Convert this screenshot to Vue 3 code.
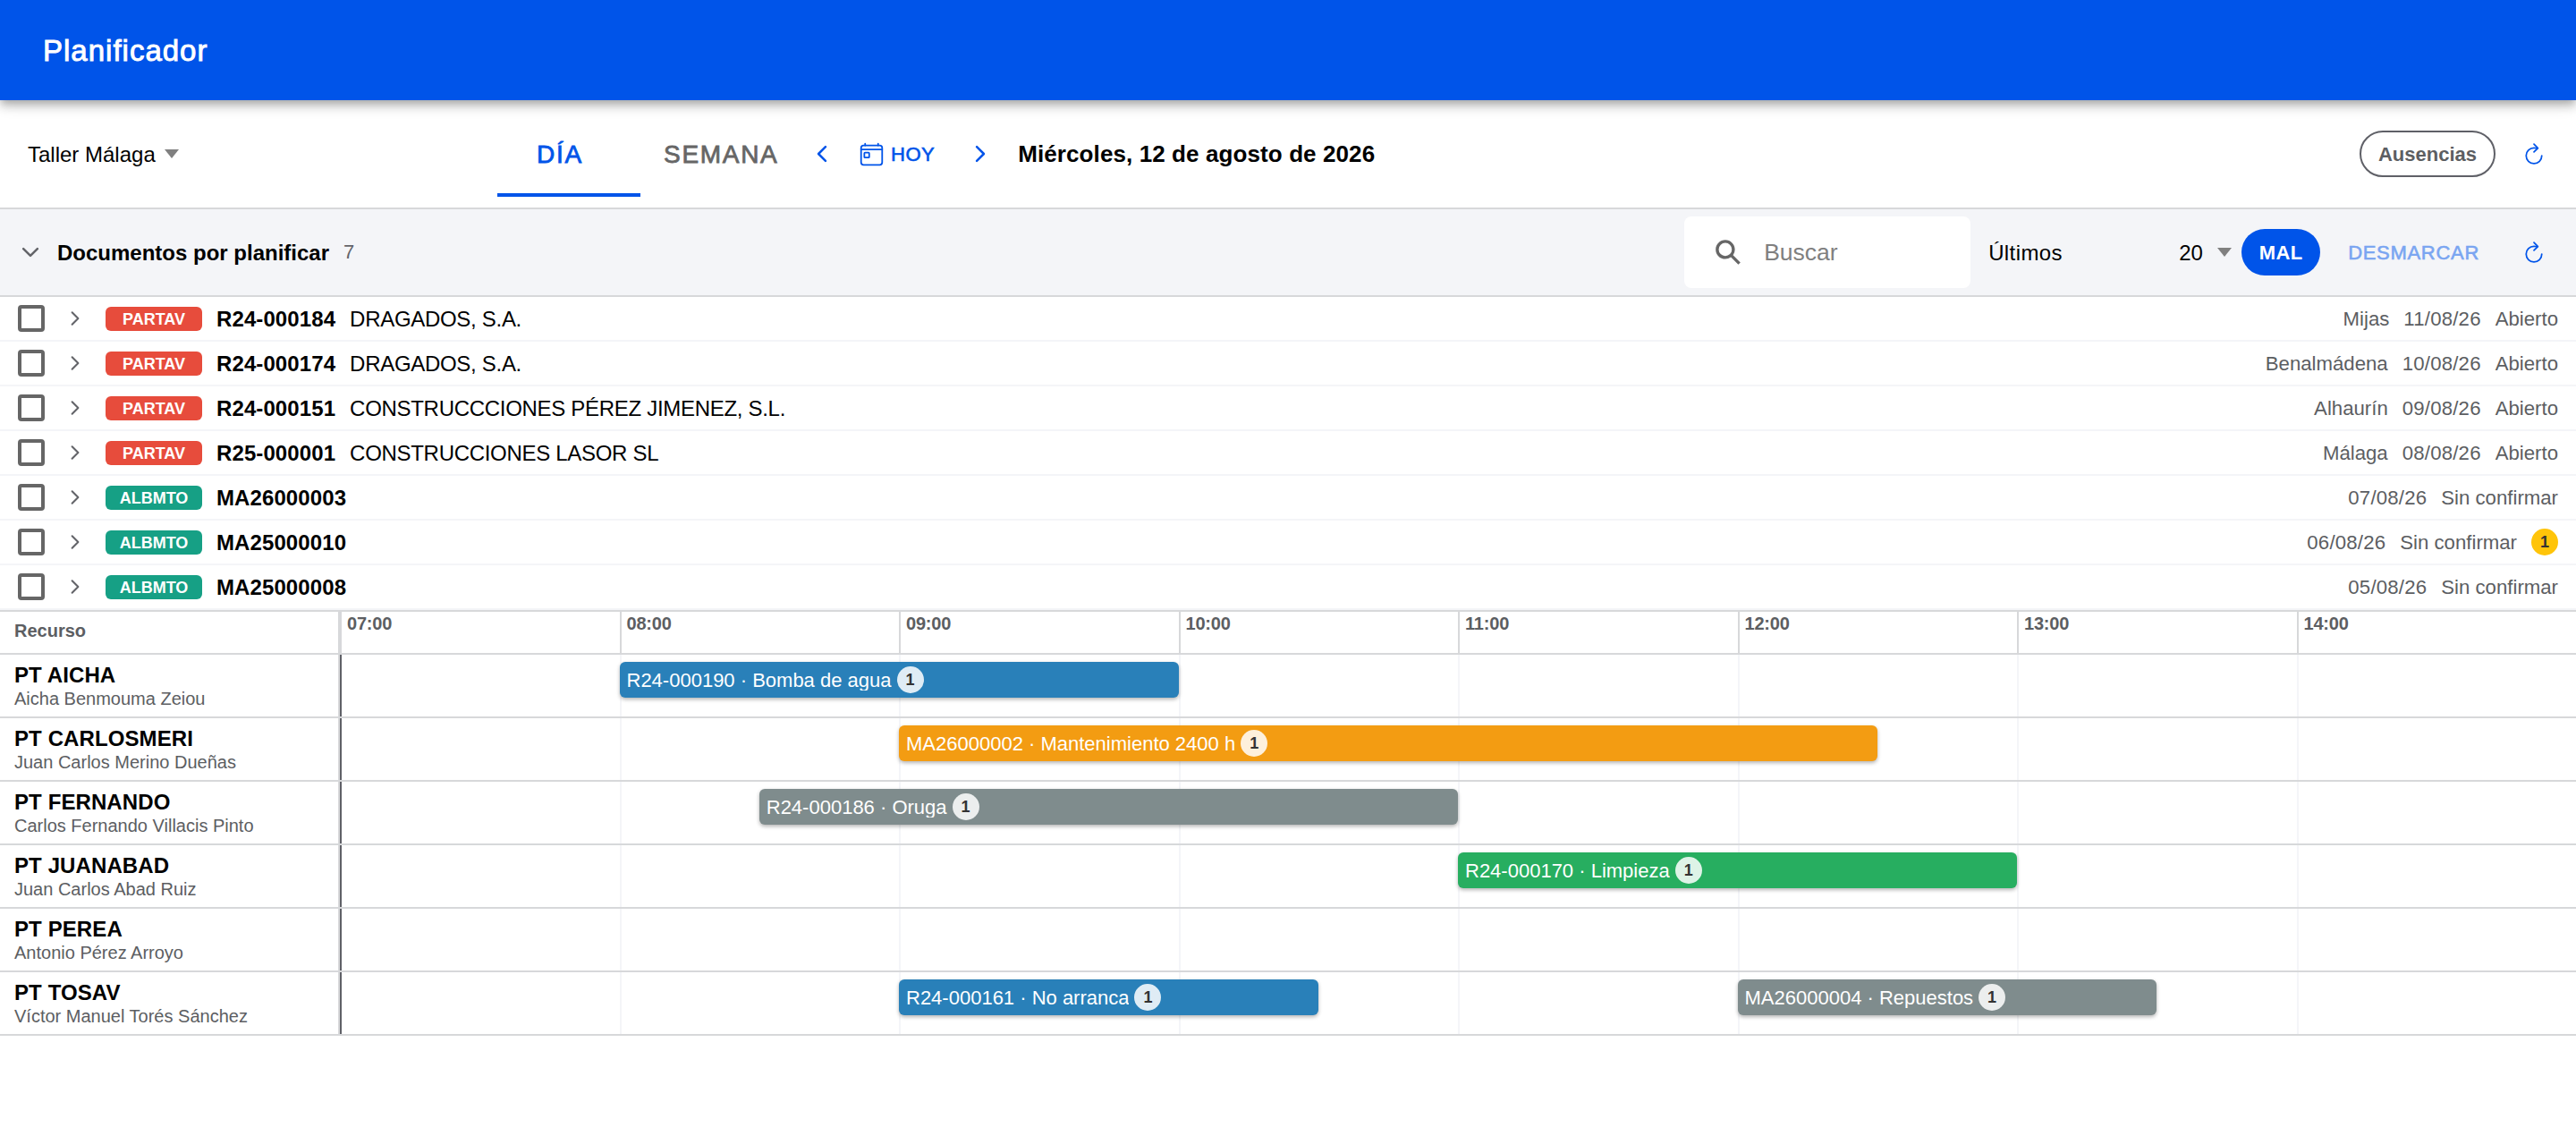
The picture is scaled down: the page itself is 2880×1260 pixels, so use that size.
<template>
  <div class="page">
    <header class="app-header">
      <h1 class="app-title">Planificador</h1>
    </header>

    <!-- Barra de navegación -->
    <div class="toolbar">
      <div class="workshop">
        <span class="workshop-name">Taller Málaga</span>
        <span class="caret"></span>
      </div>
      <div class="tabs">
        <button class="tab tab-day" :class="{ selected: view === 'day' }" @click="view = 'day'">DÍA</button>
        <button class="tab tab-week" :class="{ selected: view === 'week' }" @click="view = 'week'">SEMANA</button>
      </div>
      <div class="date-nav">
        <svg class="icon primary" viewBox="0 0 512 512"><path class="thick" d="M328 112L184 256l144 144" /></svg>
        <button class="today">
          <svg class="icon today-icon" viewBox="0 0 512 512">
            <rect x="48" y="80" width="416" height="384" rx="48" />
            <path d="M128 48v32M384 48v32M464 160H48" />
            <rect x="112" y="224" width="96" height="96" rx="13" />
          </svg>
          <span>HOY</span>
        </button>
        <svg class="icon primary" viewBox="0 0 512 512"><path class="thick" d="M184 112l144 144-144 144" /></svg>
        <strong class="current-date">Miércoles, 12 de agosto de 2026</strong>
      </div>
      <div class="toolbar-end">
        <button class="pill outline">Ausencias</button>
        <svg class="icon primary" viewBox="0 0 512 512">
          <path d="M320 146s24.36-12-64-12a160 160 0 10160 160" />
          <path d="M256 58l80 80-80 80" />
        </svg>
      </div>
    </div>

    <!-- Documentos pendientes -->
    <div class="docs-bar">
      <div class="docs-toggle" @click="open = !open">
        <svg class="icon muted" viewBox="0 0 512 512"><path class="thick" d="M112 184l144 144 144-144" /></svg>
        <strong class="docs-title">Documentos por planificar</strong>
        <span class="docs-count">{{ documents.length }}</span>
      </div>
      <div class="docs-actions">
        <div class="search">
          <svg class="search-icon" viewBox="0 0 512 512">
            <path d="M464 428L339.92 303.9a160.48 160.48 0 0030.72-94.58C370.64 120.37 298.27 48 209.32 48S48 120.37 48 209.32s72.37 161.32 161.32 161.32a160.48 160.48 0 0094.58-30.72L428 464zM209.32 319.69a110.38 110.38 0 11110.37-110.37 110.5 110.5 0 01-110.37 110.37z" />
          </svg>
          <span class="search-hint">Buscar</span>
        </div>
        <div class="latest">
          <span class="latest-label">Últimos</span>
          <span class="latest-value">20</span>
          <span class="caret"></span>
        </div>
        <button class="pill solid">MAL</button>
        <button class="clear">DESMARCAR</button>
        <svg class="icon primary" viewBox="0 0 512 512">
          <path d="M320 146s24.36-12-64-12a160 160 0 10160 160" />
          <path d="M256 58l80 80-80 80" />
        </svg>
      </div>
    </div>

    <div v-if="open" class="docs">
      <div v-for="doc in documents" :key="doc.code" class="doc">
        <span class="checkbox"></span>
        <svg class="doc-chevron muted" viewBox="0 0 512 512"><path class="thin" d="M184 112l144 144-144 144" /></svg>
        <span class="doc-type" :class="doc.type.toLowerCase()">{{ doc.type }}</span>
        <strong class="doc-code">{{ doc.code }}</strong>
        <span class="doc-client">{{ doc.client }}</span>
        <div class="doc-meta">
          <span v-if="doc.place" class="doc-place">{{ doc.place }}</span>
          <span class="doc-date">{{ doc.date }}</span>
          <span class="doc-status">{{ doc.status }}</span>
          <span v-if="doc.count" class="count warning">{{ doc.count }}</span>
        </div>
      </div>
    </div>

    <!-- Diagrama de recursos -->
    <div class="gantt">
      <div class="gantt-head">
        <div class="resource-head">Recurso</div>
        <div class="track">
          <div v-for="hour in hours" :key="hour" class="hour">{{ hour }}</div>
        </div>
      </div>
      <div v-for="resource in resources" :key="resource.code" class="gantt-row">
        <div class="resource">
          <strong class="resource-code">{{ resource.code }}</strong>
          <span class="resource-name">{{ resource.name }}</span>
        </div>
        <div class="track">
          <div v-for="hour in hours" :key="hour" class="slot"></div>
          <div
            v-for="task in resource.tasks"
            :key="task.label"
            class="task"
            :class="task.color"
            :style="taskStyle(task)"
          >
            <span class="task-label">{{ task.label }}</span>
            <span class="count">1</span>
          </div>
        </div>
      </div>
    </div>
  </div>
</template>

<script setup>
import { ref } from 'vue';

const view = ref('day');
const open = ref(true);

const START_HOUR = 7;
const hours = ['07:00', '08:00', '09:00', '10:00', '11:00', '12:00', '13:00', '14:00'];

const documents = ref([
  { type: 'PARTAV', code: 'R24-000184', client: 'DRAGADOS, S.A.', place: 'Mijas', date: '11/08/26', status: 'Abierto' },
  { type: 'PARTAV', code: 'R24-000174', client: 'DRAGADOS, S.A.', place: 'Benalmádena', date: '10/08/26', status: 'Abierto' },
  { type: 'PARTAV', code: 'R24-000151', client: 'CONSTRUCCCIONES PÉREZ JIMENEZ, S.L.', place: 'Alhaurín', date: '09/08/26', status: 'Abierto' },
  { type: 'PARTAV', code: 'R25-000001', client: 'CONSTRUCCIONES LASOR SL', place: 'Málaga', date: '08/08/26', status: 'Abierto' },
  { type: 'ALBMTO', code: 'MA26000003', date: '07/08/26', status: 'Sin confirmar' },
  { type: 'ALBMTO', code: 'MA25000010', date: '06/08/26', status: 'Sin confirmar', count: 1 },
  { type: 'ALBMTO', code: 'MA25000008', date: '05/08/26', status: 'Sin confirmar' },
]);

const resources = ref([
  { code: 'PT AICHA', name: 'Aicha Benmouma Zeiou', tasks: [{ label: 'R24-000190 · Bomba de agua', from: 8, to: 10, color: 'blue' }] },
  { code: 'PT CARLOSMERI', name: 'Juan Carlos Merino Dueñas', tasks: [{ label: 'MA26000002 · Mantenimiento 2400 h', from: 9, to: 12.5, color: 'orange' }] },
  { code: 'PT FERNANDO', name: 'Carlos Fernando Villacis Pinto', tasks: [{ label: 'R24-000186 · Oruga', from: 8.5, to: 11, color: 'gray' }] },
  { code: 'PT JUANABAD', name: 'Juan Carlos Abad Ruiz', tasks: [{ label: 'R24-000170 · Limpieza', from: 11, to: 13, color: 'green' }] },
  { code: 'PT PEREA', name: 'Antonio Pérez Arroyo', tasks: [] },
  {
    code: 'PT TOSAV',
    name: 'Víctor Manuel Torés Sánchez',
    tasks: [
      { label: 'R24-000161 · No arranca', from: 9, to: 10.5, color: 'blue' },
      { label: 'MA26000004 · Repuestos', from: 12, to: 13.5, color: 'gray' },
    ],
  },
]);

// Posición y ancho de la tarea en porcentaje de la jornada
const taskStyle = (task) => ({
  left: ((task.from - START_HOUR) / hours.length) * 100 + '%',
  width: ((task.to - task.from) / hours.length) * 100 + '%',
});
</script>

<style>
body {
  background: #fff;
}
</style>

<style scoped>
.page {
  width: 100%;
  min-height: 1260px;
  background: #fff;
  color: #000;
  font-family: "Liberation Sans", Arial, sans-serif;
  font-size: 24px;
}

.page * {
  box-sizing: border-box;
}

button {
  margin: 0;
  padding: 0;
  border: none;
  background: none;
  font-family: inherit;
  cursor: pointer;
}

/* Cabecera */
.app-header {
  position: relative;
  display: flex;
  align-items: center;
  height: 112px;
  padding: 2px 0 0 48px;
  background: #0054e9;
  color: #fff;
  box-shadow: 0 4px 8px -2px rgba(0, 0, 0, 0.2), 0 8px 10px 0 rgba(0, 0, 0, 0.14), 0 2px 20px 0 rgba(0, 0, 0, 0.12);
}

.app-title {
  margin: 0;
  font-size: 33px;
  font-weight: 400;
  letter-spacing: 1px;
  -webkit-text-stroke: 0.9px #fff;
}

/* Iconos */
.icon {
  display: block;
  flex: none;
  width: 28px;
  height: 28px;
}

.icon path,
.icon rect,
.doc-chevron path {
  fill: none;
  stroke: currentColor;
  stroke-width: 32;
  stroke-linecap: round;
  stroke-linejoin: round;
}

.icon .thick {
  stroke-width: 46;
}

.primary {
  color: #0054e9;
}

.muted {
  color: #636469;
}

.caret {
  width: 0;
  height: 0;
  border-left: 8px solid transparent;
  border-right: 8px solid transparent;
  border-top: 10px solid #808080;
}

/* Barra de navegación */
.toolbar {
  display: flex;
  align-items: center;
  height: 122px;
  border-bottom: 2px solid #d7d8da;
}

.workshop {
  display: flex;
  align-items: center;
  gap: 10px;
  width: 556px;
  padding-left: 31px;
}

.workshop-name {
  padding-top: 1px;
}

.tabs {
  display: flex;
  align-self: flex-start;
}

.tab {
  height: 108px;
  padding-top: 17px;
  border-bottom: 4px solid transparent;
  color: #666;
  font-size: 28px;
  letter-spacing: 1.7px;
  text-align: left;
  -webkit-text-stroke: 0.8px currentColor;
}

.tab.selected {
  border-bottom-color: #0054e9;
  color: #0054e9;
}

.tab-day {
  width: 160px;
  padding-left: 44px;
}

.tab-week {
  width: 189px;
  padding-left: 26px;
}

.date-nav {
  display: flex;
  align-items: center;
}

.today {
  display: flex;
  align-items: center;
  gap: 7px;
  margin: 0 37px 0 27px;
  color: #0054e9;
  font-size: 22px;
  letter-spacing: 0.5px;
  -webkit-text-stroke: 0.6px currentColor;
}

.today span {
  padding-top: 1px;
}

.today-icon {
  width: 29px;
  height: 29px;
}

.current-date {
  margin-left: 28px;
  padding-top: 1px;
  font-size: 26px;
  letter-spacing: 0.1px;
}

.toolbar-end {
  display: flex;
  align-items: center;
  gap: 29px;
  margin-left: auto;
  padding-right: 33px;
}

.pill {
  height: 52px;
  padding-top: 1px;
  border-radius: 26px;
  font-size: 22px;
  font-weight: 700;
}

.pill.outline {
  width: 152px;
  border: 2px solid #5f6067;
  color: #5c5e62;
}

.pill.solid {
  width: 88px;
  margin-left: 11px;
  background: #0054e9;
  color: #fff;
  letter-spacing: 0.4px;
}

/* Documentos */
.docs-bar {
  display: flex;
  align-items: center;
  justify-content: space-between;
  height: 98px;
  border-bottom: 2px solid #d7d8da;
  background: #f4f5f8;
}

.docs-toggle {
  display: flex;
  align-items: center;
  padding-left: 20px;
}

.docs-title {
  margin-left: 16px;
  padding-top: 1px;
}

.docs-count {
  margin-left: 16px;
  color: #636469;
  font-size: 22px;
}

.docs-actions {
  display: flex;
  align-items: center;
  padding-right: 33px;
}

.search {
  display: flex;
  align-items: center;
  gap: 23px;
  width: 320px;
  height: 80px;
  padding-left: 32px;
  border-radius: 8px;
  background: #fff;
  color: #808080;
  font-size: 26.5px;
}

.search-hint {
  padding-top: 1px;
}

.search-icon {
  width: 34px;
  height: 34px;
  fill: #666;
}

.latest {
  display: flex;
  align-items: center;
  width: 292px;
  padding-left: 20px;
}

.latest-label {
  width: 213px;
  padding-top: 1px;
  letter-spacing: 0.4px;
}

.latest-value {
  width: 43px;
  padding-top: 1px;
}

.clear {
  margin: 0 47px 0 31px;
  padding-top: 1px;
  color: #7aa5f1;
  font-size: 22px;
  letter-spacing: 0.7px;
  -webkit-text-stroke: 0.6px currentColor;
}

.doc {
  display: flex;
  align-items: center;
  height: 50px;
  padding: 0 20px;
  border-bottom: 2px solid #f4f5f8;
}

.checkbox {
  width: 30px;
  height: 30px;
  border: 4px solid #666;
  border-radius: 4px;
}

.doc-chevron {
  width: 24px;
  height: 24px;
  margin: 0 22px;
}

.doc-chevron .thin {
  stroke-width: 44;
}

.doc-type {
  width: 108px;
  height: 27px;
  border-radius: 6px;
  color: #fff;
  font-size: 18px;
  font-weight: 700;
  line-height: 28px;
  text-align: center;
}

.doc-type.partav {
  background: #e74c3c;
}

.doc-type.albmto {
  background: #16a085;
}

.doc-code {
  margin-left: 16px;
  padding-top: 1px;
  letter-spacing: 0.1px;
}

.doc-client {
  margin-left: 16px;
  padding-top: 1px;
  letter-spacing: -0.3px;
}

.doc-meta {
  display: flex;
  align-items: center;
  gap: 16px;
  margin-left: auto;
  color: #5c5e62;
  font-size: 22.2px;
}

.doc-place,
.doc-date,
.doc-status {
  padding-top: 1px;
}

.doc-date {
  letter-spacing: 0.2px;
}

.count {
  flex: none;
  width: 30px;
  height: 30px;
  border-radius: 50%;
  background: rgba(255, 255, 255, 0.85);
  color: #333;
  font-size: 18px;
  font-weight: 700;
  line-height: 31px;
  text-align: center;
}

.count.warning {
  background: #ffc409;
}

/* Diagrama */
.gantt {
  border-top: 2px solid #d7d8da;
}

.gantt-head,
.gantt-row {
  display: flex;
  border-bottom: 2px solid #d7d8da;
}

.gantt-head {
  height: 48px;
  color: #5c5e62;
  font-size: 20px;
  font-weight: 700;
}

.gantt-row {
  height: 71px;
}

.resource-head,
.resource {
  flex: none;
  width: 380px;
  padding-left: 16px;
  border-right: 2px solid #d7d8da;
}

.resource-head {
  line-height: 42px;
}

.resource {
  display: flex;
  flex-direction: column;
  justify-content: center;
}

.resource-code {
  line-height: 29px;
  letter-spacing: 0.1px;
}

.resource-name {
  color: #5c5e62;
  font-size: 20px;
  line-height: 24px;
}

.track {
  position: relative;
  flex: 1;
  display: grid;
  grid-template-columns: repeat(8, 1fr);
}

.hour {
  padding-left: 6px;
  border-left: 2px solid #d7d8da;
  line-height: 26px;
  letter-spacing: -0.2px;
}

.slot {
  border-left: 2px solid #f4f5f8;
}

/* Hora actual al inicio de la jornada */
.slot:first-child {
  border-left-color: #5f6067;
}

.task {
  position: absolute;
  top: 8px;
  display: flex;
  align-items: center;
  gap: 6px;
  height: 40px;
  padding: 0 8px;
  border-radius: 6px;
  color: #fff;
  box-shadow: 0 2px 4px rgba(0, 0, 0, 0.3);
}

.task-label {
  overflow: hidden;
  margin-top: 1px;
  font-size: 22px;
  line-height: 22px;
  white-space: nowrap;
}

.task.blue {
  background: #2980b9;
}

.task.orange {
  background: #f39c12;
}

.task.gray {
  background: #7f8c8d;
}

.task.green {
  background: #27ae60;
}
</style>
